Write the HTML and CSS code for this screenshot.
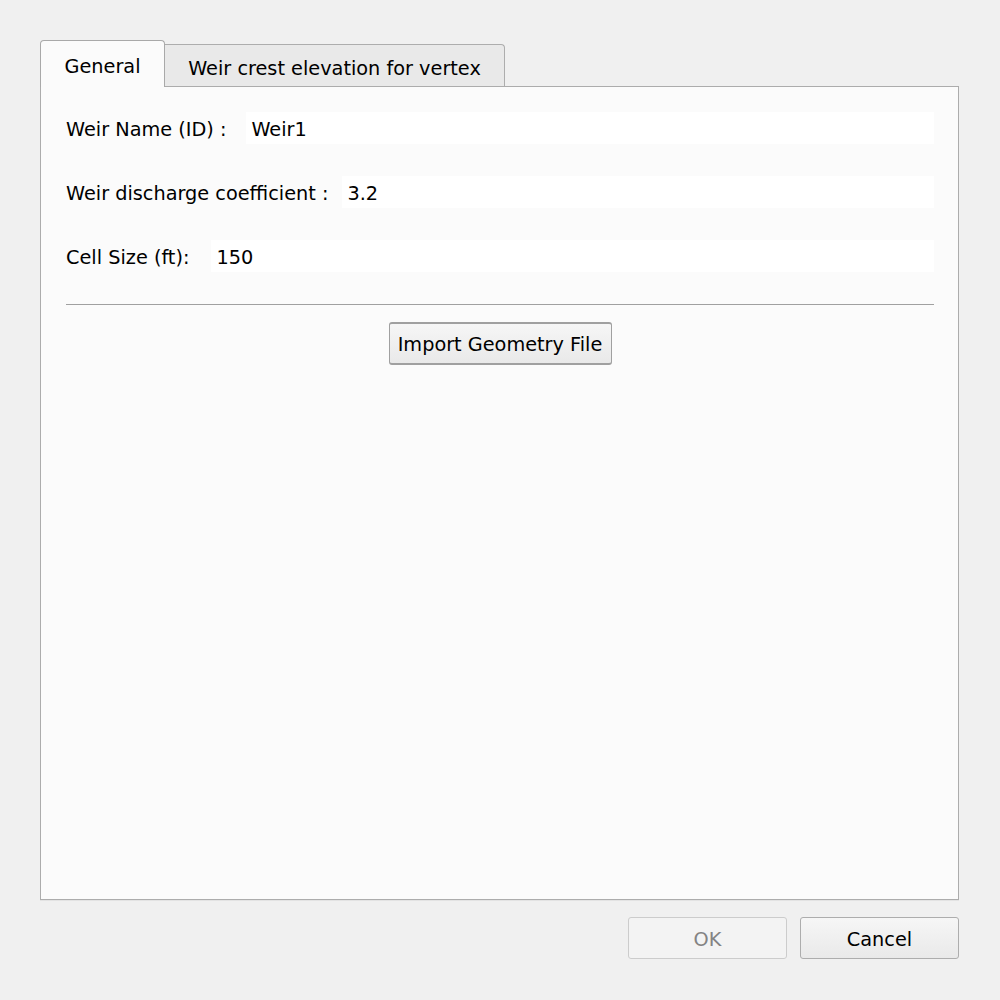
FILE: index.html
```html
<!DOCTYPE html>
<html lang="en">
<head>
  <meta charset="UTF-8">
  <title>Weir Properties</title>
  <link rel="stylesheet" href="styles.css">
</head>
<body>
  <div class="dialog">
    <div class="tab-bar">
      <div class="tab tab-active">General</div>
      <div class="tab">Weir crest elevation for vertex</div>
    </div>
    <div class="tab-pane">
      <div class="form-row">
        <label class="form-label form-label-name">Weir Name (ID) :</label>
        <div class="field">Weir1</div>
      </div>
      <div class="form-row">
        <label class="form-label">Weir discharge coefficient :</label>
        <div class="field">3.2</div>
      </div>
      <div class="form-row">
        <label class="form-label form-label-wide">Cell Size (ft):</label>
        <div class="field">150</div>
      </div>
      <hr class="separator">
      <div class="import-row">
        <button class="btn btn-import">Import Geometry File</button>
      </div>
    </div>
    <div class="button-box">
      <button class="btn btn-dialog" disabled>OK</button>
      <button class="btn btn-dialog">Cancel</button>
    </div>
  </div>
</body>
</html>
```

FILE: styles.css
```css
body {
  margin: 0;
  background: #f0f0f0;
  font-family: 'DejaVu Sans', Tahoma, sans-serif;
  font-size: 19.3px;
  color: #000;
}
.dialog {
  width: 919px;
  padding: 40px 0 0 40px;
}

/* tabs */
.tab-bar {
  display: flex;
  align-items: flex-end;
  height: 46px;
}
.tab {
  box-sizing: border-box;
  height: 42px;
  border: 1px solid #adadad;
  border-bottom: none;
  border-radius: 4px 4px 0 0;
  background: #e9e9e9;
  display: flex;
  align-items: center;
  padding-top: 5px;
}
.tab-active {
  height: 47px;
  width: 125px;
  justify-content: center;
  padding-top: 4px;
  background: #fbfbfb;
  position: relative;
  z-index: 1;
  margin-bottom: -1px;
  border-color: #a9a9a9;
}
.tab-active + .tab {
  border-left: none;
  width: 340px;
  justify-content: center;
  border-radius: 0 4px 0 0;
}

.tab-pane {
  box-sizing: border-box;
  height: 814px;
  border: 1px solid #acacac;
  background: #fbfbfb;
  padding: 25px 24px 0 25px;
  box-shadow: 0 1px 0 #e3e3e3;
}

/* form rows */
.form-row {
  display: flex;
  align-items: center;
  height: 32px;
  margin-bottom: 32px;
}
.form-label {
  margin-right: 14px;
  white-space: nowrap;
  padding-top: 3px;
}
.form-label-name {
  margin-right: 20px;
}
.form-label-wide {
  margin-right: 22px;
}
.field {
  flex: 1;
  height: 32px;
  line-height: 35px;
  background: #fff;
  padding-left: 5px;
}
.separator {
  margin: 0;
  border: none;
  border-top: 1px solid #a0a0a0;
}
.import-row {
  display: flex;
  justify-content: center;
  padding-top: 17px;
}

/* buttons */
.btn {
  font-family: inherit;
  font-size: 19.3px;
  color: #000;
  border: 1px solid #adadad;
  border-radius: 3px;
  background: linear-gradient(#f6f6f6, #e9e9e9);
  padding: 2px 0 0;
  box-sizing: border-box;
}
.btn-import {
  width: 223px;
  height: 43px;
  border-color: #a0a0a0;
  border-width: 2px 1px;
}
.button-box {
  display: flex;
  justify-content: flex-end;
  gap: 13px;
  margin-top: 17px;
}
.btn-dialog {
  width: 159px;
  height: 42px;
}
.btn-dialog:disabled {
  color: #838383;
  border-color: #cccccc;
  background: #f3f3f3;
}
```
